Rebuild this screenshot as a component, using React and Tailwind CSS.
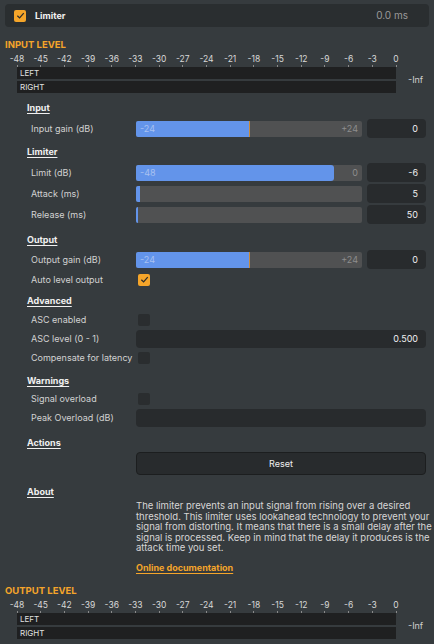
import React from "react";

const scale = ["-48", "-45", "-42", "-39", "-36", "-33", "-30", "-27", "-24", "-21", "-18", "-15", "-12", "-9", "-6", "-3", "0"];

const about = [
  "The limiter prevents an input signal from rising over a desired",
  "threshold. This limiter uses lookahead technology to prevent your",
  "signal from distorting. It means that there is a small delay after the",
  "signal is processed. Keep in mind that the delay it produces is the",
  "attack time you set.",
];

function CheckBox({ checked }) {
  return (
    <div
      className={`w-[12px] h-[12px] rounded-[2px] flex items-center justify-center ${
        checked ? "bg-[#f5a52a]" : "bg-[#2a2d2f]"
      }`}
    >
      {checked && (
        <svg width="9" height="9" viewBox="0 0 10 10">
          <path d="M1.5 5.2 L4 7.6 L8.6 2.4" fill="none" stroke="#2b2b2b" strokeWidth="1.4" />
        </svg>
      )}
    </div>
  );
}

function Meter({ title }) {
  return (
    <div>
      <div className="h-[14px] pl-[5px] text-[9.5px] font-bold leading-[14px] text-[#f5a52a]">
        {title}
      </div>
      <div className="mt-[2px] w-[379px] ml-[17px] flex justify-between h-[13px]">
        {scale.map((s) => (
          <div key={s} className="w-0 flex flex-col items-center">
            <span className="text-[8.5px] leading-[11px] text-[#d8d8d8] whitespace-nowrap">{s}</span>
            <span className="w-px h-[2px] bg-[#8a8a8a]"></span>
          </div>
        ))}
      </div>
      <div className="flex items-center">
        <div className="ml-[17px] w-[379px] flex flex-col gap-[2px]">
          <div className="h-[12px] bg-[#1f2021] pl-[3px] text-[8px] leading-[12px] text-[#e0e0e0]">LEFT</div>
          <div className="h-[12px] bg-[#1f2021] pl-[3px] text-[8px] leading-[12px] text-[#e0e0e0]">RIGHT</div>
        </div>
        <span className="ml-[12px] text-[9px] text-[#cfcfcf]">-Inf</span>
      </div>
    </div>
  );
}

function Heading({ children, className = "" }) {
  return (
    <div className={`h-[14px] text-[9px] leading-[14px] font-bold text-[#f0f0f0] underline underline-offset-2 ${className}`}>
      {children}
    </div>
  );
}

function Label({ children }) {
  return <div className="w-[109px] shrink-0 pl-[4px] text-[9px] text-[#d2d2d2] whitespace-nowrap">{children}</div>;
}

function SliderRow({ label, pct, min, max, value, handle }) {
  return (
    <div className="h-[21px] flex items-center">
      <Label>{label}</Label>
      <div className="relative w-[226px] h-[16px] rounded-[2px] bg-[#505152] overflow-hidden">
        <div
          className={`h-full bg-[#6394ea] ${pct > 50 ? "rounded-r-[3px]" : ""}`}
          style={{ width: pct + "%" }}
        ></div>
        {handle && <div className="absolute top-0 h-full w-px bg-[#c88a3c]" style={{ left: pct + "%" }}></div>}
        {min && (
          <span className="absolute left-[4px] top-0 text-[9px] leading-[16px] text-[#a8c1f0]">{min}</span>
        )}
        {max && (
          <span className="absolute right-[4px] top-0 text-[9px] leading-[16px] text-[#8d8d8d]">{max}</span>
        )}
      </div>
      <div className="ml-[5px] w-[59px] h-[19px] rounded-[4px] bg-[#282b2d] text-right pr-[8px] text-[9px] leading-[19px] text-[#f0f0f0]">
        {value}
      </div>
    </div>
  );
}

function CheckRow({ label, checked }) {
  return (
    <div className="h-[19px] flex items-center">
      <Label>{label}</Label>
      <div className="pl-[2px]">
        <CheckBox checked={checked} />
      </div>
    </div>
  );
}

function FieldRow({ label, value }) {
  return (
    <div className="h-[19px] flex items-center">
      <Label>{label}</Label>
      <div className="w-[290px] h-[18px] rounded-[4px] bg-[#282b2d] text-right pr-[8px] text-[9px] leading-[18px] text-[#f0f0f0]">
        {value}
      </div>
    </div>
  );
}

export default function App() {
  return (
    <div
      className="w-[434px] h-[644px] overflow-hidden bg-[#363b3e] text-white"
      style={{ fontFamily: "Inter, 'Noto Sans', sans-serif" }}
    >
      <div className="pt-[4px] px-[5px]">
        <div className="h-[23px] rounded-[4px] bg-[#2a2e30] flex items-center pl-[9px] pr-[21px]">
          <CheckBox checked />
          <span className="ml-[9px] text-[9px] font-bold text-[#f2f2f2]">Limiter</span>
          <span className="ml-auto text-[10px] text-[#9a9a9a]">0.0 ms</span>
        </div>
      </div>

      <div className="mt-[11px]">
        <Meter title="INPUT LEVEL" />
      </div>

      <div className="pl-[27px] pr-[8px]">
        <Heading className="mt-[8px]">Input</Heading>
        <div className="mt-[3px]">
          <SliderRow label="Input gain (dB)" pct={50} min="-24" max="+24" value="0" handle />
        </div>

        <Heading className="mt-[6px]">Limiter</Heading>
        <div className="mt-[3px]">
          <SliderRow label="Limit (dB)" pct={87.5} min="-48" max="0" value="-6" />
          <SliderRow label="Attack (ms)" pct={1.8} value="5" />
          <SliderRow label="Release (ms)" pct={1} value="50" />
        </div>

        <Heading className="mt-[8px]">Output</Heading>
        <div className="mt-[2px]">
          <SliderRow label="Output gain (dB)" pct={50} min="-24" max="+24" value="0" handle />
          <CheckRow label="Auto level output" checked />
        </div>

        <Heading className="mt-[5px]">Advanced</Heading>
        <div className="mt-[2px]">
          <CheckRow label="ASC enabled" />
          <FieldRow label="ASC level (0 - 1)" value="0.500" />
          <CheckRow label="Compensate for latency" />
        </div>

        <Heading className="mt-[7px]">Warnings</Heading>
        <div className="mt-[1px]">
          <CheckRow label="Signal overload" />
          <FieldRow label="Peak Overload (dB)" value="" />
        </div>

        <Heading className="mt-[9px]">Actions</Heading>
        <div className="flex mt-[2px]">
          <div className="w-[109px] shrink-0"></div>
          <button className="w-[290px] h-[23px] rounded-[4px] bg-[#282b2d] border border-[#1c1e1f] text-[9px] text-[#f0f0f0]">
            Reset
          </button>
        </div>

        <Heading className="mt-[10px]">About</Heading>
        <div className="flex mt-[2px]">
          <div className="w-[109px] shrink-0"></div>
          <div className="w-[290px]">
            <p className="text-[9.5px] leading-[10.5px] text-[#d6d6d6]">
              {about.map((line) => (
                <span key={line} className="block whitespace-nowrap">
                  {line}
                </span>
              ))}
            </p>
            <a className="block mt-[7px] text-[9px] font-bold text-[#f5a52a] underline underline-offset-2">
              Online documentation
            </a>
          </div>
        </div>
      </div>

      <div className="mt-[10px]">
        <Meter title="OUTPUT LEVEL" />
      </div>
    </div>
  );
}
